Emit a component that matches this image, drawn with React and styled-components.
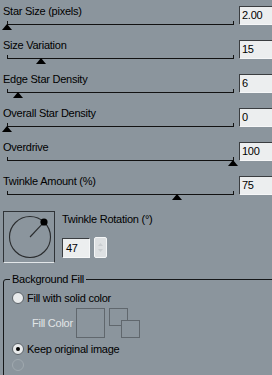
import React from "react";
import styled, { createGlobalStyle } from "styled-components";

const BG = "#8b959d";

const GlobalStyle = createGlobalStyle`
  html, body {
    margin: 0;
    padding: 0;
    background: ${BG};
  }
  body {
    font-family: "Liberation Sans", Arial, sans-serif;
    font-size: 11px;
    color: #000;
    overflow: hidden;
  }
`;

const Panel = styled.div`
  width: 272px;
  height: 375px;
  overflow: hidden;
  background: ${BG};
`;

const SliderRow = styled.div`
  display: flex;
  height: 34px;
  padding-left: 3px;
`;

const SliderColumn = styled.div`
  width: 236px;
  flex-shrink: 0;
  display: flex;
  flex-direction: column;
`;

const Label = styled.div`
  margin-top: ${(p) => p.$top || 0}px;
  height: 13px;
  line-height: 13px;
  letter-spacing: -0.25px;
  white-space: nowrap;
  color: ${(p) => (p.$disabled ? "#e2e5e7" : "#000")};
`;

const Track = styled.div`
  position: relative;
  margin-left: 4px;
  width: 227px;
  height: 6px;
  border-bottom: 1px solid #121212;

  &::before,
  &::after {
    content: "";
    position: absolute;
    bottom: 0;
    width: 1px;
    height: 3px;
    background: #121212;
  }
  &::before {
    left: 0;
  }
  &::after {
    right: 0;
  }
`;

const Thumb = styled.div`
  position: absolute;
  top: 6px;
  width: 0;
  height: 0;
  border-left: 5px solid transparent;
  border-right: 5px solid transparent;
  border-bottom: 6px solid #000;
`;

const ValueBox = styled.div`
  margin-top: 6px;
  width: 40px;
  height: 19px;
  box-sizing: border-box;
  flex-shrink: 0;
  border: 1px solid;
  border-color: #3a3d40 #f6f7f8 #f6f7f8 #3a3d40;
  background: #eceeef;
  padding-left: 2px;
  line-height: 17px;
  letter-spacing: -0.25px;
`;

const DialSection = styled.div`
  display: flex;
  gap: 7px;
  margin-top: 7px;
  padding-left: 3px;
  height: 52px;
`;

const DialBox = styled.div`
  width: 52px;
  height: 52px;
  box-sizing: border-box;
  border: 1px solid;
  border-color: #2f3337 #2f3337 #e3e7e9 #2f3337;
`;

const DialSide = styled.div`
  display: flex;
  flex-direction: column;
  padding-top: 2px;
`;

const SpinRow = styled.div`
  display: flex;
  align-items: center;
  gap: 4px;
  margin-top: 11px;
`;

const SpinInput = styled(ValueBox)`
  margin-top: 0;
  width: 28px;
  height: 20px;
  line-height: 18px;
  padding-left: 3px;
`;

const SpinButton = styled.div`
  width: 13px;
  height: 21px;
  box-sizing: border-box;
  border: 1px solid #f4f6f7;
  border-radius: 2px;
  background: #dde0e2;
  display: flex;
  align-items: center;
  justify-content: center;
`;

const Group = styled.fieldset`
  margin: 10px 0 0 3px;
  padding: 0 0 0 6px;
  width: 300px;
  height: 130px;
  min-width: 0;
  border: 1px solid #151719;
  border-radius: 3px 0 0 0;
`;

const Legend = styled.legend`
  padding: 0 2px;
  line-height: 13px;
  letter-spacing: -0.25px;
`;

const RadioRow = styled.div`
  display: flex;
  align-items: center;
  gap: 3px;
  height: 14px;
  margin-top: ${(p) => p.$top || 0}px;
  padding-left: 2px;
`;

const RadioDot = styled.span`
  width: 12px;
  height: 12px;
  box-sizing: border-box;
  border-radius: 50%;
  border: 1px solid ${(p) => (p.$disabled ? "#a0a9af" : "#5b6268")};
  background: ${(p) => (p.$disabled ? "transparent" : "#e9ebec")};
  display: flex;
  align-items: center;
  justify-content: center;

  &::after {
    content: "";
    width: 4px;
    height: 4px;
    border-radius: 50%;
    background: #000;
    display: ${(p) => (p.$checked ? "block" : "none")};
  }
`;

const FillRow = styled.div`
  display: flex;
  align-items: center;
  margin-top: 3px;
  padding-left: 22px;
  height: 30px;
`;

const FillLabel = styled(Label)`
  width: 44px;
`;

const Swatch = styled.div`
  width: 29px;
  height: 30px;
  box-sizing: border-box;
  border: 1px solid #60676d;
  margin-right: 4px;
`;

const sliders = [
  { label: "Star Size (pixels)", value: "2.00", pos: 0 },
  { label: "Size Variation", value: "15", pos: 0.15 },
  { label: "Edge Star Density", value: "6", pos: 0.05 },
  { label: "Overall Star Density", value: "0", pos: 0 },
  { label: "Overdrive", value: "100", pos: 1 },
  { label: "Twinkle Amount (%)", value: "75", pos: 0.75 },
];

function Dial({ angle }) {
  const cx = 26;
  const cy = 25;
  const r = 20.5;
  const rad = (angle * Math.PI) / 180;
  const x = cx + r * Math.cos(rad);
  const y = cy - r * Math.sin(rad);
  return (
    <svg width="50" height="50" viewBox="0 0 50 50">
      <circle cx={cx} cy={cy} r={r} fill="none" stroke="#2a2c2e" strokeWidth="1.1" />
      <line x1={cx} y1={cy} x2={x} y2={y} stroke="#2a2c2e" strokeWidth="1.1" />
      <circle cx={x} cy={y} r="3.6" fill="#000" />
    </svg>
  );
}

export default function App() {
  return (
    <Panel>
      <GlobalStyle />
      {sliders.map((s) => (
        <SliderRow key={s.label}>
          <SliderColumn>
            <Label $top={5}>{s.label}</Label>
            <Track>
              <Thumb style={{ left: Math.round(s.pos * 226) - 5 }} />
            </Track>
          </SliderColumn>
          <ValueBox>{s.value}</ValueBox>
        </SliderRow>
      ))}

      <DialSection>
        <DialBox>
          <Dial angle={47} />
        </DialBox>
        <DialSide>
          <Label>Twinkle Rotation (°)</Label>
          <SpinRow>
            <SpinInput>47</SpinInput>
            <SpinButton>
              <svg width="7" height="15" viewBox="0 0 7 15">
                <path d="M3.5 3 L6 6 H1 Z" fill="#c9cdd0" />
                <path d="M3.5 12 L6 9 H1 Z" fill="#c9cdd0" />
              </svg>
            </SpinButton>
          </SpinRow>
        </DialSide>
      </DialSection>

      <Group>
        <Legend>Background Fill</Legend>
        <RadioRow $top={5}>
          <RadioDot />
          <Label>Fill with solid color</Label>
        </RadioRow>
        <FillRow>
          <FillLabel $disabled>Fill Color</FillLabel>
          <Swatch />
          <svg width="31" height="30" viewBox="0 0 31 30">
            <rect x="0.5" y="0.5" width="18" height="17" fill="none" stroke="#60676d" />
            <rect x="12.5" y="12.5" width="18" height="17" fill={BG} stroke="#60676d" />
          </svg>
        </FillRow>
        <RadioRow $top={4}>
          <RadioDot $checked />
          <Label>Keep original image</Label>
        </RadioRow>
        <RadioRow $top={2}>
          <RadioDot $disabled />
        </RadioRow>
      </Group>
    </Panel>
  );
}
